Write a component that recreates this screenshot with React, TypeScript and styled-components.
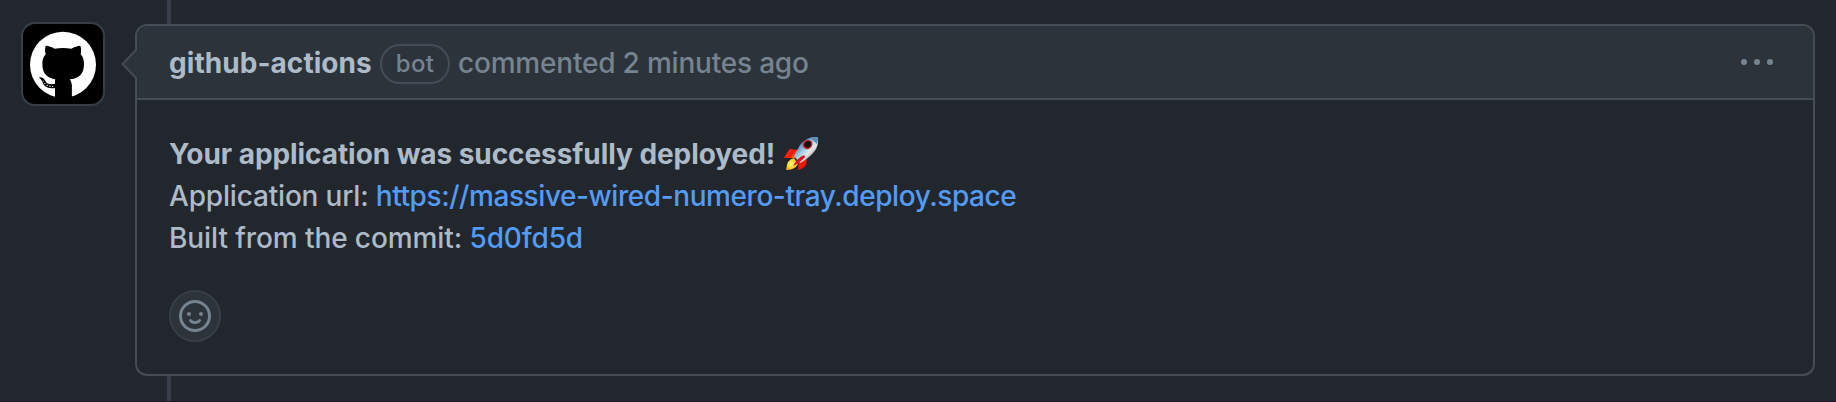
import React from "react";
import styled, { createGlobalStyle } from "styled-components";

const Global = createGlobalStyle`
  * { box-sizing: border-box; }
  body {
    margin: 0;
    background: #22272e;
    overflow: hidden;
    font-family: Inter, "Noto Sans", sans-serif;
  }
`;

const Timeline = styled.main`
  position: relative;
  display: flex;
  align-items: flex-start;
  height: 402px;
  padding: 22px 21px 0;
  border-bottom: 1px solid #1e1728;
  background: #22272e;

  &::before {
    content: "";
    position: absolute;
    top: 0;
    bottom: 0;
    left: 167px;
    width: 4px;
    background: #373e47;
  }
`;

const Avatar = styled.a`
  flex: none;
  display: block;
  width: 84px;
  height: 84px;
  border: 2px solid #373e47;
  border-radius: 14px;
  background: #000;
  overflow: hidden;

  svg { display: block; }
`;

const Card = styled.article`
  position: relative;
  flex: 1;
  height: 352px;
  margin: 2px 0 0 30px;
  border: 2px solid #444c56;
  border-radius: 12px;
  background: #22272e;
`;

const Pointer = styled.svg`
  position: absolute;
  left: -17px;
  top: 21px;
`;

const Header = styled.header`
  display: flex;
  align-items: center;
  height: 74px;
  padding: 4px 40px 0 32px;
  border-bottom: 2px solid #444c56;
  border-radius: 10px 10px 0 0;
  background: #2d333b;
  color: #768390;
  font-size: 28px;
  line-height: 42px;
  white-space: nowrap;
`;

const Author = styled.strong`
  width: 211px;
  margin-top: -2px;
  color: #adbac7;
  font-weight: 700;
  letter-spacing: 0.05px;
`;

const BotLabel = styled.span`
  display: flex;
  align-items: center;
  justify-content: center;
  width: 70px;
  height: 40px;
  margin-right: 8px;
  border: 2px solid #444c56;
  border-radius: 20px;
  font-size: 24px;
  font-weight: 550;
  letter-spacing: 0.3px;
`;

const Meta = styled.span`
  flex: 1;
  margin-top: -2px;
  font-weight: 450;
  letter-spacing: -0.2px;
`;

const Body = styled.div`
  padding: 33px 32px 0;
  color: #adbac7;
  font-size: 28px;
  line-height: 42px;
  white-space: nowrap;
`;

const Line = styled.div<{ $strong?: boolean; $spacing?: number }>`
  display: flex;
  align-items: center;
  height: 42px;
  white-space: pre;
  font-weight: ${(p) => (p.$strong ? 700 : 450)};
  letter-spacing: ${(p) => p.$spacing ?? 0}px;
`;

const Link = styled.a<{ $spacing?: number }>`
  color: #539bf5;
  text-decoration: none;
  letter-spacing: ${(p) => p.$spacing ?? 0}px;
`;

const Rocket = styled.svg`
  margin-left: 9px;
`;

const ReactionButton = styled.button`
  display: flex;
  align-items: center;
  justify-content: center;
  width: 52px;
  height: 52px;
  margin: 31px 0 0 32px;
  padding: 0;
  border: 2px solid #373e47;
  border-radius: 50%;
  background: #2d333b;
  color: #768390;
`;

const OctocatMark = () => (
  <svg width="80" height="80" viewBox="69 72 240 240">
    <circle cx="189" cy="194" r="99" fill="#fff" />
    <path
      d="M137 137c9 0 19 4 27 9 16-3 34-3 50 0 9-5 19-9 27-9 3 9 3 18 1 26 7 8 10 17 10 28 0 31-14 44-43 47 4 5 6 11 6 18v42h-50v-60c0-1 2 0 6 0-29-3-44-16-44-47 0-11 3-20 10-28-2-8-3-17 0-26Z"
      fill="#000"
    />
    <path d="M165 298v-40c0-9 2-15 7-20h36l7 18v42Z" fill="#000" />
    <path
      d="M117 232c7-2 13 1 17 7 4 7 7 12 14 13 6 1 12 0 18-1v13c-13 2-24 0-31-6-6-5-7-12-11-18-2-3-5-4-7-8Z"
      fill="#000"
    />
    <path d="m128 245 3-2M133 252l3-3M141 258l1-4M150 261v-4M158 261v-3" stroke="#fff" strokeWidth="3" />
  </svg>
);

const RocketArt = () => (
  <Rocket width="36" height="36" viewBox="0 0 36 36">
    <defs>
      <linearGradient id="hull" x1="12" y1="10" x2="28" y2="26" gradientUnits="userSpaceOnUse">
        <stop stopColor="#4184b8" />
        <stop offset=".38" stopColor="#a5cce0" />
        <stop offset=".6" stopColor="#e9e9e6" />
        <stop offset="1" stopColor="#77787b" />
      </linearGradient>
      <linearGradient id="fin" x1="2" y1="14" x2="12" y2="22" gradientUnits="userSpaceOnUse">
        <stop stopColor="#ff3b12" />
        <stop offset=".55" stopColor="#f51208" />
        <stop offset="1" stopColor="#ff9a18" />
      </linearGradient>
      <radialGradient id="flame" cx=".45" cy=".5" r=".6">
        <stop stopColor="#fff68a" />
        <stop offset=".55" stopColor="#ffd331" />
        <stop offset="1" stopColor="#f09116" />
      </radialGradient>
    </defs>
    <path d="m15 14-9-1Q3 16 0 22l11 0Z" fill="url(#fin)" />
    <path d="m23 23-1 6q-3 4-8 5l1-9Z" fill="#ef170a" />
    <path d="M10 22Q3 23 2 34q9 0 12-6Z" fill="url(#flame)" />
    <path d="M34 1Q23 0 16 9l-6 11 6 7q8-4 14-11 5-6 4-15Z" fill="url(#hull)" />
    <path d="M34 1q-5-.5-8 1 3 2 7 6 1-3 1-7Z" fill="#5b8fb5" />
    <ellipse cx="23.5" cy="8.5" rx="5" ry="4.5" transform="rotate(-40 23.5 8.5)" fill="#c5232a" />
    <ellipse cx="23.7" cy="8.3" rx="3.4" ry="3.1" transform="rotate(-40 23.7 8.3)" fill="#160b0e" />
    <path d="M20 19q-7 3-11 11 7-3 12-9Z" fill="#d51420" />
  </Rocket>
);

const Smiley = () => (
  <svg width="32" height="32" viewBox="0 0 16 16" fill="none" stroke="currentColor">
    <circle cx="8" cy="8" r="7.25" strokeWidth="1.5" />
    <path d="M5.75 10.25S6.4 11.25 8 11.25s2.25-1 2.25-1" strokeWidth="1.5" strokeLinecap="round" />
    <circle cx="5" cy="7" r="1" fill="currentColor" stroke="none" />
    <circle cx="11" cy="7" r="1" fill="currentColor" stroke="none" />
  </svg>
);

const Kebab = () => (
  <svg width="32" height="32" viewBox="0 0 32 32" fill="#768390">
    <circle cx="3" cy="14" r="3" />
    <circle cx="16" cy="14" r="3" />
    <circle cx="29" cy="14" r="3" />
  </svg>
);

export default function App() {
  return (
    <>
      <Global />
      <Timeline>
        <Avatar aria-label="github-actions">
          <OctocatMark />
        </Avatar>
        <Card>
          <Pointer width="18" height="34" viewBox="0 0 18 34">
            <path d="M18 2 2.5 17 18 32Z" fill="#2d333b" />
            <path d="M16 3 2.5 17 16 31" fill="none" stroke="#444c56" strokeWidth="2" />
          </Pointer>
          <Header>
            <Author>github-actions</Author>
            <BotLabel>bot</BotLabel>
            <Meta>commented 2 minutes ago</Meta>
            <Kebab />
          </Header>
          <Body>
            <Line $strong $spacing={-0.07}>
              Your application was successfully deployed!
              <RocketArt />
            </Line>
            <Line $spacing={-0.18}>
              {"Application url: "}
              <Link $spacing={-0.43}>https://massive-wired-numero-tray.deploy.space</Link>
            </Line>
            <Line $spacing={-0.09}>
              {"Built from the commit: "}
              <Link $spacing={-0.15}>5d0fd5d</Link>
            </Line>
          </Body>
          <ReactionButton aria-label="Add reaction">
            <Smiley />
          </ReactionButton>
        </Card>
      </Timeline>
    </>
  );
}
